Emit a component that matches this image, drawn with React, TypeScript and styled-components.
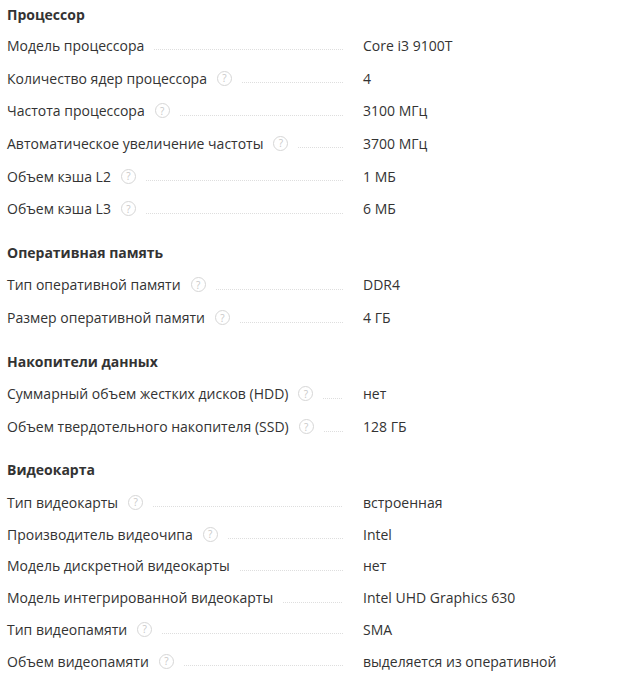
import React from "react";
import styled, { createGlobalStyle } from "styled-components";

const GlobalStyle = createGlobalStyle`
  html, body {
    margin: 0;
    padding: 0;
    background: #ffffff;
  }
  body {
    font-family: "Open Sans", "Noto Sans", "Liberation Sans", sans-serif;
    color: #333333;
  }
`;

const Page = styled.div`
  width: 636px;
  padding: 0 0 0 7px;
  box-sizing: border-box;
  display: flex;
  flex-direction: column;
`;

const Section = styled.section`
  display: flex;
  flex-direction: column;
  & + & {
    margin-top: 12.5px;
  }
`;

const Title = styled.h3`
  margin: 0;
  height: 29px;
  display: flex;
  align-items: center;
  font-size: 14px;
  font-weight: 700;
  color: #333333;
  box-sizing: border-box;
  ${Section} + ${Section} & {
    height: 31px;
    padding-bottom: 2px;
  }
`;

const Row = styled.div<{ $h: number }>`
  display: flex;
  align-items: center;
  height: ${(p) => p.$h}px;
  font-size: 14px;
`;

const LabelCell = styled.div`
  width: 336px;
  flex: none;
  display: flex;
  align-items: center;
  margin-right: 20px;
`;

const LabelText = styled.span`
  white-space: nowrap;
  color: #333333;
`;

const Help = styled.span`
  flex: none;
  width: 15px;
  height: 15px;
  margin-left: 10px;
  border: 1px solid #d6d6d6;
  border-radius: 50%;
  box-sizing: border-box;
  display: inline-flex;
  align-items: center;
  justify-content: center;
  font-size: 10px;
  line-height: 1;
  color: #c8c8c8;
  font-family: "Open Sans", sans-serif;
`;

const Dots = styled.span`
  flex: 1;
  margin-left: 10px;
  height: 1px;
  margin-top: 9px;
  background-image: linear-gradient(to right, #dedede 1px, transparent 1px);
  background-size: 2px 1px;
  background-repeat: repeat-x;
`;

const Value = styled.div`
  white-space: nowrap;
  color: #333333;
`;

type Item = { label: string; value: string; help?: boolean };
type Group = { title: string; rowH: number; items: Item[] };

const data: Group[] = [
  {
    title: "Процессор",
    rowH: 32.7,
    items: [
      { label: "Модель процессора", value: "Core i3 9100T" },
      { label: "Количество ядер процессора", value: "4", help: true },
      { label: "Частота процессора", value: "3100 МГц", help: true },
      { label: "Автоматическое увеличение частоты", value: "3700 МГц", help: true },
      { label: "Объем кэша L2", value: "1 МБ", help: true },
      { label: "Объем кэша L3", value: "6 МБ", help: true },
    ],
  },
  {
    title: "Оперативная память",
    rowH: 32.7,
    items: [
      { label: "Тип оперативной памяти", value: "DDR4", help: true },
      { label: "Размер оперативной памяти", value: "4 ГБ", help: true },
    ],
  },
  {
    title: "Накопители данных",
    rowH: 32.7,
    items: [
      { label: "Суммарный объем жестких дисков (HDD)", value: "нет", help: true },
      { label: "Объем твердотельного накопителя (SSD)", value: "128 ГБ", help: true },
    ],
  },
  {
    title: "Видеокарта",
    rowH: 31.8,
    items: [
      { label: "Тип видеокарты", value: "встроенная", help: true },
      { label: "Производитель видеочипа", value: "Intel", help: true },
      { label: "Модель дискретной видеокарты", value: "нет" },
      { label: "Модель интегрированной видеокарты", value: "Intel UHD Graphics 630" },
      { label: "Тип видеопамяти", value: "SMA", help: true },
      { label: "Объем видеопамяти", value: "выделяется из оперативной", help: true },
    ],
  },
];

export default function App() {
  return (
    <>
      <GlobalStyle />
      <Page>
        {data.map((g) => (
          <Section key={g.title}>
            <Title>{g.title}</Title>
            {g.items.map((it) => (
              <Row key={it.label} $h={g.rowH}>
                <LabelCell>
                  <LabelText>{it.label}</LabelText>
                  {it.help && <Help>?</Help>}
                  <Dots />
                </LabelCell>
                <Value>{it.value}</Value>
              </Row>
            ))}
          </Section>
        ))}
      </Page>
    </>
  );
}
